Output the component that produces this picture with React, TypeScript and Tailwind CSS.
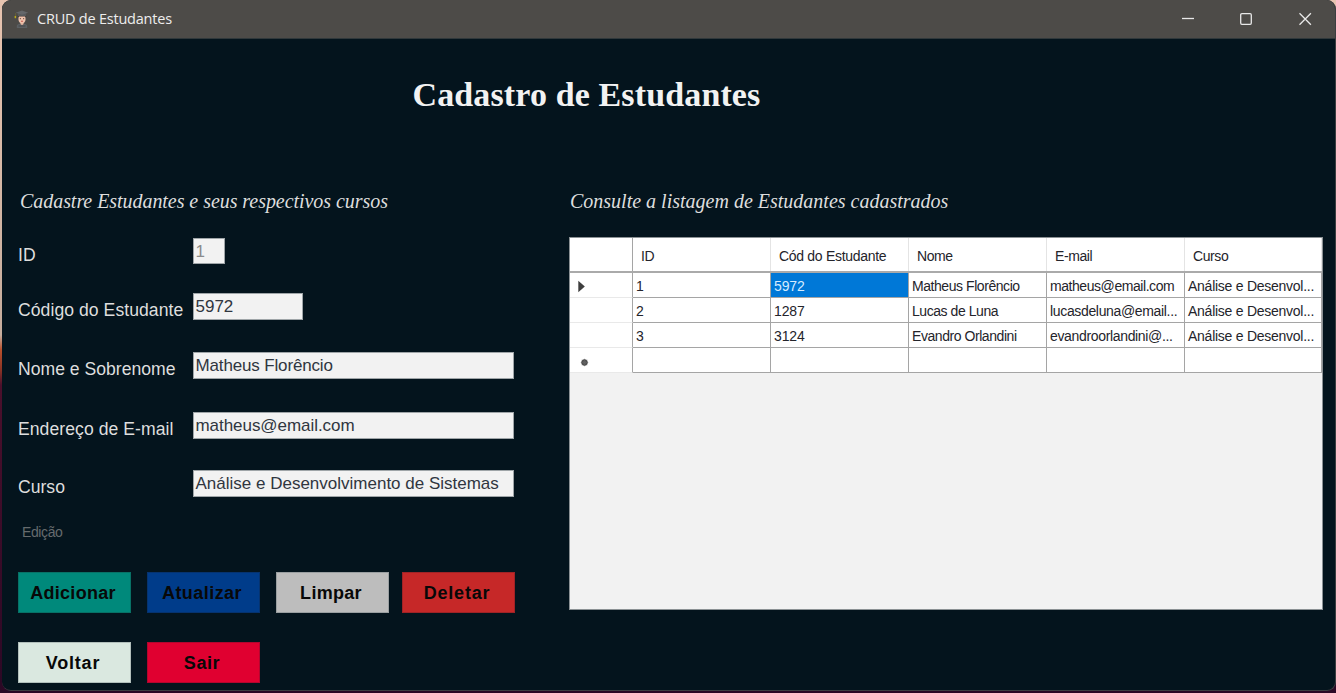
type Field = { label: string; value: string; row: string; box: string; labelClass: string; valueClass: string };

const fields: Field[] = [
  { label: "ID", value: "1", row: "mt-[25px] h-[26px]", box: "w-[32px] text-[#8b8b8b]", labelClass: "", valueClass: "" },
  { label: "Código do Estudante", value: "5972", row: "mt-[29px] h-[27px]", box: "w-[110px] text-[#303640]", labelClass: "tracking-[0.05px]", valueClass: "" },
  { label: "Nome e Sobrenome", value: "Matheus Florêncio", row: "mt-[32px] h-[27px]", box: "w-[321px] text-[#303640]", labelClass: "", valueClass: "tracking-[-0.15px]" },
  { label: "Endereço de E-mail", value: "matheus@email.com", row: "mt-[33px] h-[27px]", box: "w-[321px] text-[#303640]", labelClass: "tracking-[0.05px]", valueClass: "tracking-[-0.05px]" },
  { label: "Curso", value: "Análise e Desenvolvimento de Sistemas", row: "mt-[31px] h-[27px]", box: "w-[321px] text-[#303640]", labelClass: "", valueClass: "" },
];

const rows = [
  ["1", "5972", "Matheus Florêncio", "matheus@email.com", "Análise e Desenvol..."],
  ["2", "1287", "Lucas de Luna", "lucasdeluna@email...", "Análise e Desenvol..."],
  ["3", "3124", "Evandro Orlandini", "evandroorlandini@...", "Análise e Desenvol..."],
  ["", "", "", "", ""],
];

const columns = ["ID", "Cód do Estudante", "Nome", "E-mail", "Curso"];

const buttons = [
  { text: "Adicionar", color: "bg-[#00897b] border-[#087166] tracking-[0.3px]" },
  { text: "Atualizar", color: "bg-[#003c8a] border-[#06336f] tracking-[0.45px]" },
  { text: "Limpar", color: "bg-[#bdbdbd] border-[#9a9fa1] tracking-[0.3px]" },
  { text: "Deletar", color: "bg-[#c62828] border-[#a02326] tracking-[0.8px]" },
  { text: "Voltar", color: "bg-[#dae8e0] border-[#b2bfbb] tracking-[0.8px]" },
  { text: "Sair", color: "bg-[#e00030] border-[#b3052e] tracking-[0.6px]" },
];

function StudentIcon() {
  return (
    <svg width="15" height="19" viewBox="0 0 15 19">
      <path d="M2.8 18v-2c0-1.700 1.800-2.600 5.200-2.600s5.200.9 5.200 2.600v2z" fill="#5c6063" />
      <path d="M6.400 11.500h3.200v2.600L8 15.300l-1.600-1.200z" fill="#e3b49f" />
      <path d="M4.500 5.500h7v4c0 2.200-1.300 3.800-3.500 3.800s-3.500-1.600-3.500-3.800z" fill="#f0c3ad" />
      <path d="M3.800 8V5h8.400v3l-1.200-1.500H5z" fill="#3e3936" />
      <path d="M3.900 3.200h8.200v2.900H3.900z" fill="#56595c" />
      <path d="M1.700 2.800L8 .6l6.300 2.200L8 4.800z" fill="#64676a" />
      <path d="M1.600 3v4" stroke="#6b6536" strokeWidth=".8" />
      <rect x=".6" y="6" width="1.500" height="2.200" fill="#b8a719" />
      <path d="M5.800 8.700h1.200M9 8.700h1.200" stroke="#513d34" strokeWidth=".9" />
      <path d="M7 11.200h2" stroke="#c4574f" strokeWidth="1.100" />
      <path d="M4.500 16h7" stroke="#44474a" strokeWidth="1" />
    </svg>
  );
}

function Grid() {
  return (
    <div className="h-[373px] w-[754px] border border-[#8b9194] bg-[#f2f2f2] text-[14px] leading-none text-[#24242b]">
      <div className="grid h-[35px] grid-cols-[63px_138px_138px_138px_138px_137px] border-b-2 border-[#aaaaaa] bg-white">
        <div className="border-r border-[#a5a5a5]" />
        {columns.map((c, i) => (
          <div key={c} className="flex items-center border-r border-[#e4e4e4] pt-[2px] pl-[8px]">
            <span className={i === 1 ? "tracking-[-0.3px]" : "tracking-[-0.4px]"}>{c}</span>
          </div>
        ))}
      </div>
      {rows.map((r, n) => (
        <div key={n} className="grid h-[25px] grid-cols-[63px_138px_138px_138px_138px_137px] bg-white">
          <div className="flex items-center border-r border-b border-r-[#a5a5a5] border-b-[#e9e9e9] pl-[8px]">
            {n === 0 && (
              <svg className="mt-[2px]" width="8" height="13" viewBox="0 0 8 13"><path d="M.3 .8L6.800 6.500 .3 12.200z" fill="#3e3e3e" /></svg>
            )}
            {n === 3 && (
              <svg className="mt-[4px] ml-[2px]" width="9" height="9" viewBox="0 0 9 9">
                <circle cx="4.500" cy="4.500" r="3.200" fill="#4c4c4c" />
                <path d="M4.500 .8v7.400M.8 4.500h7.400M1.900 1.900l5.200 5.200M7.100 1.900L1.900 7.100" stroke="#666" strokeWidth=".7" />
              </svg>
            )}
          </div>
          {r.map((v, i) => (
            <div
              key={i}
              className={`flex items-center overflow-hidden border-r border-b border-[#a5a5a5] pt-[2px] pl-[3px] whitespace-nowrap ${n === 0 && i === 1 ? "bg-[#0078d7] text-[#d5ecff]" : ""}`}
            >
              <span className={i === 4 ? "tracking-[-0.26px]" : i === 1 || i === 0 ? "tracking-[-0.1px]" : i === 3 && n > 0 ? "tracking-[-0.34px]" : "tracking-[-0.44px]"}>{v}</span>
            </div>
          ))}
        </div>
      ))}
    </div>
  );
}

export default function App() {
  return (
    <div className="h-[693px] w-[1336px] overflow-hidden bg-[linear-gradient(to_bottom,#e8c4b0_0px,#c6ad9d_335px,#b9502c_350px,#8a3425_370px,#4b102c_385px,#2b0825_693px)] pl-[2px] font-['Liberation_Sans',sans-serif]">
      <div className="flex h-[691px] w-[1334px] flex-col overflow-hidden rounded-[9px] border-r border-b border-[#3b3e40] bg-[#04141d]">
        <header className="flex h-[39px] shrink-0 items-center border-b border-[#30383b] bg-[#4d4b48] pl-[12px]">
          <StudentIcon />
          <span className="ml-[8px] font-['Open_Sans',sans-serif] text-[14.5px] tracking-[-0.22px] text-[#ededed]">CRUD de Estudantes</span>
          <svg className="ml-auto mr-[23px]" width="130" height="14" viewBox="0 0 130 14" fill="none" stroke="#e8e8e8" strokeWidth="1.3">
            <path d="M0 6.500h12" />
            <rect x="58.700" y="1.700" width="10.600" height="10.600" rx="1.200" />
            <path d="M117.500 1.300l11.400 11.400M128.900 1.300l-11.400 11.400" />
          </svg>
        </header>
        <h1 className="mt-[36px] pl-[410.5px] font-['Liberation_Serif',serif] text-[34px] leading-[40px] font-bold tracking-[0.13px] text-[#f2f2f2]">Cadastro de Estudantes</h1>
        <main className="mt-[75px] flex pl-[16px]">
          <section className="w-[552px]">
            <h2 className="h-[23px] pl-[2px] font-['Liberation_Serif',serif] text-[20px] leading-[23px] tracking-[-0.05px] whitespace-nowrap text-[#dedede] italic">Cadastre Estudantes e seus respectivos cursos</h2>
            {fields.map((f) => (
              <div key={f.label} className={`flex ${f.row}`}>
                <label className={`w-[175px] shrink-0 pt-[7px] text-[17.6px] leading-[20px] whitespace-nowrap text-[#dedede] ${f.labelClass}`}>{f.label}</label>
                <div className={`border border-[#9fa5a8] bg-[#f2f2f2] pt-[3px] pl-[1.5px] text-[17px] leading-[20px] whitespace-nowrap ${f.box} ${f.valueClass}`}>{f.value}</div>
              </div>
            ))}
            <p className="mt-[27px] pl-[4px] text-[14px] leading-[16px] tracking-[-0.4px] text-[#666b6d]">Edição</p>
            <div className="mt-[32px] grid grid-cols-[129px_129px_126px_113px] gap-y-[29px]">
              {buttons.map((b) => (
                <button key={b.text} className={`h-[41px] w-[113px] border pr-[3px] text-[18px] leading-none font-bold text-[#080808] ${b.color}`}>{b.text}</button>
              ))}
            </div>
          </section>
          <section>
            <h2 className="h-[23px] font-['Liberation_Serif',serif] text-[20px] leading-[23px] whitespace-nowrap text-[#dedede] italic">Consulte a listagem de Estudantes cadastrados</h2>
            <div className="mt-[24px] -ml-px">
              <Grid />
            </div>
          </section>
        </main>
      </div>
    </div>
  );
}
